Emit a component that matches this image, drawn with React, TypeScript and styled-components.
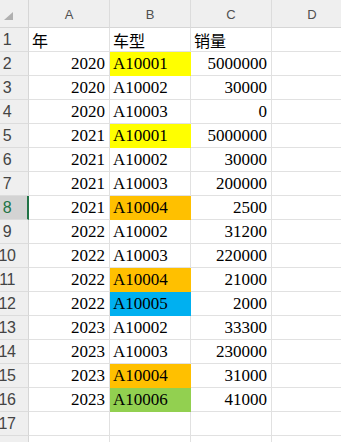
import styled, { createGlobalStyle } from 'styled-components';

const GlobalStyle = createGlobalStyle`
    html, body {
        margin: 0;
        padding: 0;
        background: #ffffff;
        overflow: hidden;
    }
`;

const rows: [number, string, number, string?][] = [
    [2020, 'A10001', 5000000, '#ffff00'],
    [2020, 'A10002', 30000],
    [2020, 'A10003', 0],
    [2021, 'A10001', 5000000, '#ffff00'],
    [2021, 'A10002', 30000],
    [2021, 'A10003', 200000],
    [2021, 'A10004', 2500, '#ffc000'],
    [2022, 'A10002', 31200],
    [2022, 'A10003', 220000],
    [2022, 'A10004', 21000, '#ffc000'],
    [2022, 'A10005', 2000, '#00b0f0'],
    [2023, 'A10002', 33300],
    [2023, 'A10003', 230000],
    [2023, 'A10004', 31000, '#ffc000'],
    [2023, 'A10006', 41000, '#92d050'],
];

const SELECTED_ROW = 8;

const Sheet = styled.div`
    width: 341px;
    height: 442px;
    overflow: hidden;
    display: grid;
    grid-template-columns: 29px 81px 81px 81px 81px;
    grid-template-rows: 28px;
    grid-auto-rows: 24px;
    font-family: 'Liberation Serif', 'Noto Sans CJK SC', serif;
`;

const Corner = styled.div`
    background: #efefef;
    border-right: 1px solid #d6d6d6;
    border-bottom: 1px solid #d6d6d6;
    box-sizing: border-box;
    display: flex;
    align-items: flex-end;
    padding: 0 0 7px 4px;
`;

const ColHead = styled.div`
    background: #efefef;
    border-right: 1px solid #dcdcdc;
    border-bottom: 1px solid #d6d6d6;
    box-sizing: border-box;
    display: flex;
    align-items: center;
    justify-content: center;
    padding-top: 1px;
    font-family: 'Liberation Sans', Arial, sans-serif;
    font-size: 13px;
    color: #505050;
`;

const RowHead = styled.div<{ $active?: boolean }>`
    background: ${(p) => (p.$active ? '#d3d3d3' : '#efefef')};
    border-right: ${(p) => (p.$active ? '2px solid #217346' : '1px solid #d6d6d6')};
    border-bottom: 1px solid #dcdcdc;
    box-sizing: border-box;
    display: flex;
    align-items: center;
    justify-content: center;
    padding-right: ${(p) => (p.$active ? '13px' : '14px')};
    font-family: 'Liberation Sans', Arial, sans-serif;
    font-size: 16px;
    letter-spacing: -0.5px;
    color: ${(p) => (p.$active ? '#217346' : '#444444')};
    white-space: nowrap;
`;

const Cell = styled.div<{ $align?: 'left' | 'right'; $fill?: string; $cjk?: boolean }>`
    background: ${(p) => p.$fill ?? '#ffffff'};
    border-right: 1px solid ${(p) => p.$fill ?? '#e1e1e1'};
    border-bottom: 1px solid ${(p) => p.$fill ?? '#e1e1e1'};
    box-sizing: border-box;
    display: flex;
    align-items: center;
    justify-content: ${(p) => (p.$align === 'right' ? 'flex-end' : 'flex-start')};
    padding: ${(p) => (p.$align === 'right' ? '1px 4px 0 0' : '1px 0 0 3px')};
    font-family: ${(p) => (p.$cjk ? "'Noto Sans CJK SC', sans-serif" : "'Liberation Serif', serif")};
    font-size: ${(p) => (p.$cjk ? '16px' : '17px')};
    color: #000000;
    white-space: nowrap;
`;

const CornerMark = () => (
    <svg width="9" height="8" viewBox="0 0 9 8">
        <polygon points="9,0 9,8 0,8" fill="#b0b0b0" />
    </svg>
);

export default function App() {
    return (
        <>
            <GlobalStyle />
            <Sheet>
                <Corner>
                    <CornerMark />
                </Corner>
                {['A', 'B', 'C', 'D'].map((c) => (
                    <ColHead key={c}>{c}</ColHead>
                ))}

                <RowHead>1</RowHead>
                <Cell $cjk>年</Cell>
                <Cell $cjk>车型</Cell>
                <Cell $cjk>销量</Cell>
                <Cell />

                {rows.map(([year, model, sales, fill], i) => {
                    const n = i + 2;
                    return [
                        <RowHead key={`h${n}`} $active={n === SELECTED_ROW}>{n}</RowHead>,
                        <Cell key={`a${n}`} $align="right">{year}</Cell>,
                        <Cell key={`b${n}`} $fill={fill}>{model}</Cell>,
                        <Cell key={`c${n}`} $align="right">{sales}</Cell>,
                        <Cell key={`d${n}`} />,
                    ];
                })}

                <RowHead>17</RowHead>
                <Cell />
                <Cell />
                <Cell />
                <Cell />

                {/* next row is only a sliver at the window's bottom edge */}
                <RowHead />
                <Cell />
                <Cell />
                <Cell />
                <Cell />
            </Sheet>
        </>
    );
}
